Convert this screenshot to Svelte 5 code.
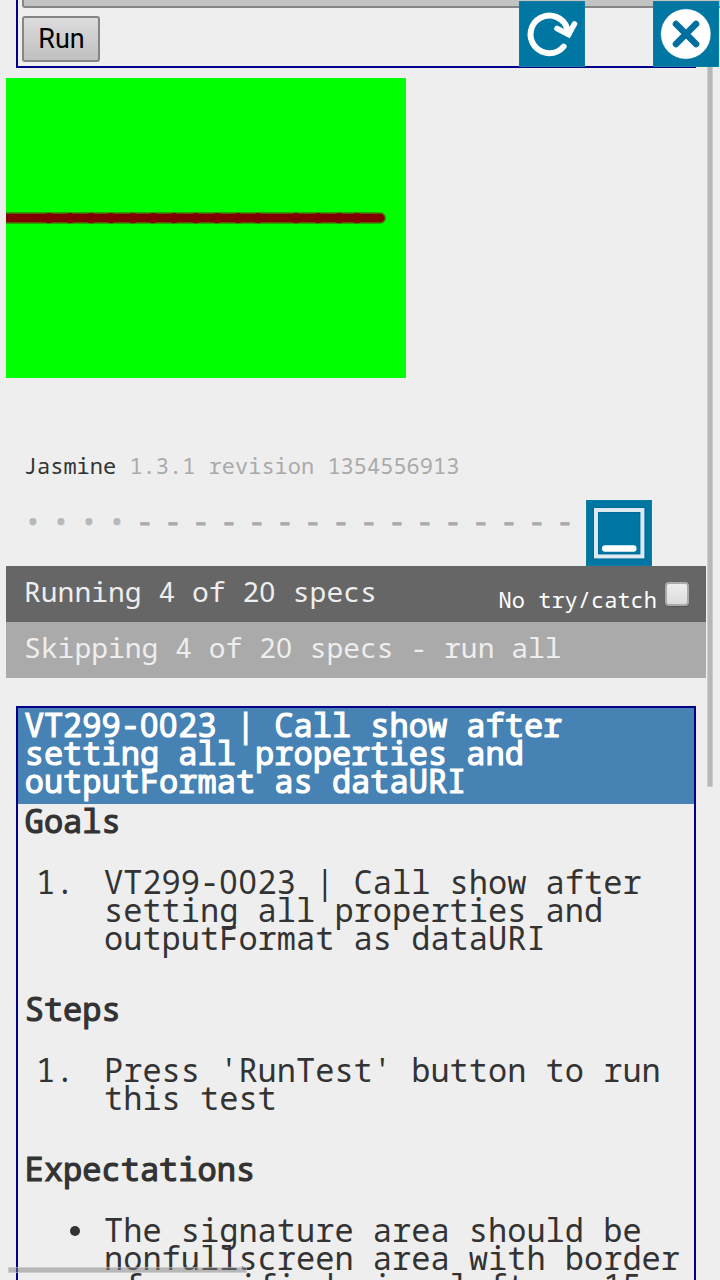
<script>
  const marks = [...Array(4).fill('•'), ...Array(16).fill('-')];
  const joints = [43, 64, 85, 105, 127, 147, 168, 190, 211, 232, 252, 290, 312, 333, 351];
  const title = 'VT299-0023 | Call show after setting all properties and outputFormat as dataURI';
</script>

<!-- Zeros are set without a slash, so they take the proportional family's glyph. -->
{#snippet plain(text)}{#each text.split(/(0+)/) as part}{#if part.startsWith('0')}<span class="zero">{part}</span>{:else}{part}{/if}{/each}{/snippet}

<div class="screen">
  <section class="controls">
    <div class="wide"></div>
    <button class="run">Run</button>
  </section>

  <svg class="canvas" width="400" height="300" viewBox="0 0 400 300">
    <rect width="400" height="300" fill="#0f0" />
    <path d="M-10 140H374.3" stroke="#800000" stroke-opacity=".5" stroke-width="11.4" stroke-linecap="round" />
    <path d="M-10 140H374.3" stroke="#800000" stroke-width="8.6" stroke-linecap="round" />
    {#each joints as x}<circle cx={x} cy="140" r="5.2" fill="#800000" />{/each}
  </svg>

  <div class="reporter">
    <div class="banner">Jasmine <span>1.3.1 revision 1354556913</span></div>
    <div class="marks">
      {#each marks as m}<span class:dot={m === '•'}>{m}</span>{/each}
    </div>
    <div class="bar running">
      <span>{@render plain('Running 4 of 20 specs')}</span>
      <label>No try/catch<i class="check"></i></label>
    </div>
    <div class="bar skipping">{@render plain('Skipping 4 of 20 specs - run all')}</div>
  </div>

  <section class="spec">
    <h1>{@render plain(title)}</h1>
    <h2>Goals</h2>
    <ol><li>{@render plain(title)}</li></ol>
    <h2>Steps</h2>
    <ol><li>Press 'RunTest' button to run this test</li></ol>
    <h2>Expectations</h2>
    <ul><li>The signature area should be nonfullscreen area with border of specified size left as 15</li></ul>
  </section>

  <div class="vscroll"></div>
  <div class="hscroll"></div>

  <svg class="icon reload" viewBox="0 0 66 66">
    <rect width="66" height="66" fill="#0d7da3" />
    <rect x="1" y="1" width="64" height="64" fill="#0077a3" />
    <path d="M44.6 45.6A18.8 18.8 0 1 1 48.2 27.5L49.5 33" fill="none" stroke="#fff" stroke-width="6" stroke-linecap="round" />
    <path d="M38 27.5L49.6 33.6L55.4 23" fill="none" stroke="#fff" stroke-width="5.6" stroke-linecap="round" />
    <path d="M44 28L50 35L54 28L49 26Z" fill="#fff" />
  </svg>
  <svg class="icon close" viewBox="0 0 66 66">
    <rect width="66" height="66" fill="#0d7da3" />
    <rect x="1" y="1" width="64" height="64" fill="#0077a3" />
    <circle cx="32.8" cy="33" r="25.2" fill="#fff" stroke="#006c9b" stroke-width=".6" />
    <path d="M23 23L43 43M43 23L23 43" stroke="#006f9e" stroke-width="6.6" stroke-linecap="round" />
  </svg>
  <svg class="icon minimize" viewBox="0 0 66 66">
    <rect width="66" height="66" fill="#0d7da3" />
    <rect x="1" y="1" width="64" height="64" fill="#0077a3" />
    <rect x="10" y="10" width="46.4" height="46.4" fill="none" stroke="#006b9b" stroke-width="6.4" />
    <rect x="10" y="10" width="46.4" height="46.4" fill="none" stroke="#dce9f1" stroke-width="4" />
    <path d="M19.2 48.5H47.4" stroke="#fff" stroke-width="6.4" stroke-linecap="round" />
  </svg>
</div>

<style>
  :global(body) { background: #eee; }
  .screen {
    position: relative; width: 720px; height: 1280px; overflow: hidden;
    background: #eee; color: #333; box-sizing: border-box;
    font-family: "Droid Sans Mono", "Noto Sans Mono", "DejaVu Sans Mono", monospace;
  }
  .zero { font-family: "Noto Sans", sans-serif; letter-spacing: .028em; }
  .controls {
    box-sizing: border-box; width: 680px; height: 68px; margin-left: 16px;
    border: 2px solid #00008b; border-top: 0; padding: 0 4px;
  }
  .wide, .run {
    box-sizing: border-box; border: 2px solid #858585; border-radius: 3px;
    background: linear-gradient(#dcdcdc, #c0c0c0);
  }
  .wide { width: 760px; height: 8px; border-top: 0; border-radius: 0 0 3px 3px; background: #c3c3c3; }
  .run {
    display: block; width: 78px; height: 46px; margin-top: 8px; padding: 0 0 0 1px;
    font: 27px/42px Roboto, sans-serif; color: #000;
  }
  .canvas { display: block; margin: 10px 0 0 6px; }
  .reporter { width: 700px; margin-left: 6px; }
  .banner { padding: 73px 0 0 17.8px; font-size: 22px; line-height: 28px; white-space: pre; }
  .banner span { color: #aaa; }
  .marks { display: flex; height: 28px; margin: 28px 0 31px; padding-left: 18.5px; font-size: 28px; line-height: 28px; color: #aaa; }
  .marks span { width: 28px; box-sizing: border-box; line-height: 26px; -webkit-text-stroke: .9px #aaa; }
  .marks .dot { color: #b7b7b7; line-height: 28px; -webkit-text-stroke: .6px #b7b7b7; }
  .bar { height: 56px; box-sizing: border-box; padding: 0 17.5px 0 18px; font-size: 28px; line-height: 51px; color: #eee; white-space: pre; }
  .running { display: flex; justify-content: space-between; background: #666; }
  .skipping { background: #aaa; }
  label { display: flex; font-size: 22px; line-height: 67px; color: #fff; }
  .check {
    width: 24px; height: 24px; box-sizing: border-box; margin: 16px 0 0 7.5px; border: 2px solid #aaa;
    border-radius: 4px; background: linear-gradient(#eee, #dcdcdc); box-shadow: 0 1px 1px #555;
  }
  .spec {
    box-sizing: border-box; width: 680px; height: 640px; margin: 28px 0 0 16px;
    border: 2px solid #00008b; font-size: 32px; line-height: 28px;
  }
  h1, h2 {
    margin: 0; font-size: 32px; line-height: 28px; font-weight: 400;
    padding: 3px 0 1px 6.7px; -webkit-text-stroke: 1.2px currentColor;
  }
  h1 { height: 96px; box-sizing: border-box; background: #4682b4; color: #fff; }
  ol, ul { margin: 32px 0 40px; padding-left: 86px; list-style: none; }
  ol li::before { content: "1."; display: inline-block; width: 68px; margin-left: -68px; }
  ul li::before {
    content: ""; display: inline-block; width: 10px; height: 10px; border-radius: 50%;
    margin: 0 24px 0 -34px; vertical-align: 6px; background: #333;
  }
  .vscroll, .hscroll { position: absolute; background: rgba(128, 128, 128, .5); box-shadow: inset 0 0 0 1px rgba(238, 238, 238, .4); }
  .vscroll { left: 707px; top: 8px; width: 6px; height: 779px; }
  .hscroll { left: 8px; top: 1267px; width: 239px; height: 6px; }
  .icon { position: absolute; width: 66px; height: 66px; }
  .reload { left: 519px; top: 1px; }
  .close { left: 653px; top: 1px; }
  .minimize { left: 586px; top: 500px; }
</style>
